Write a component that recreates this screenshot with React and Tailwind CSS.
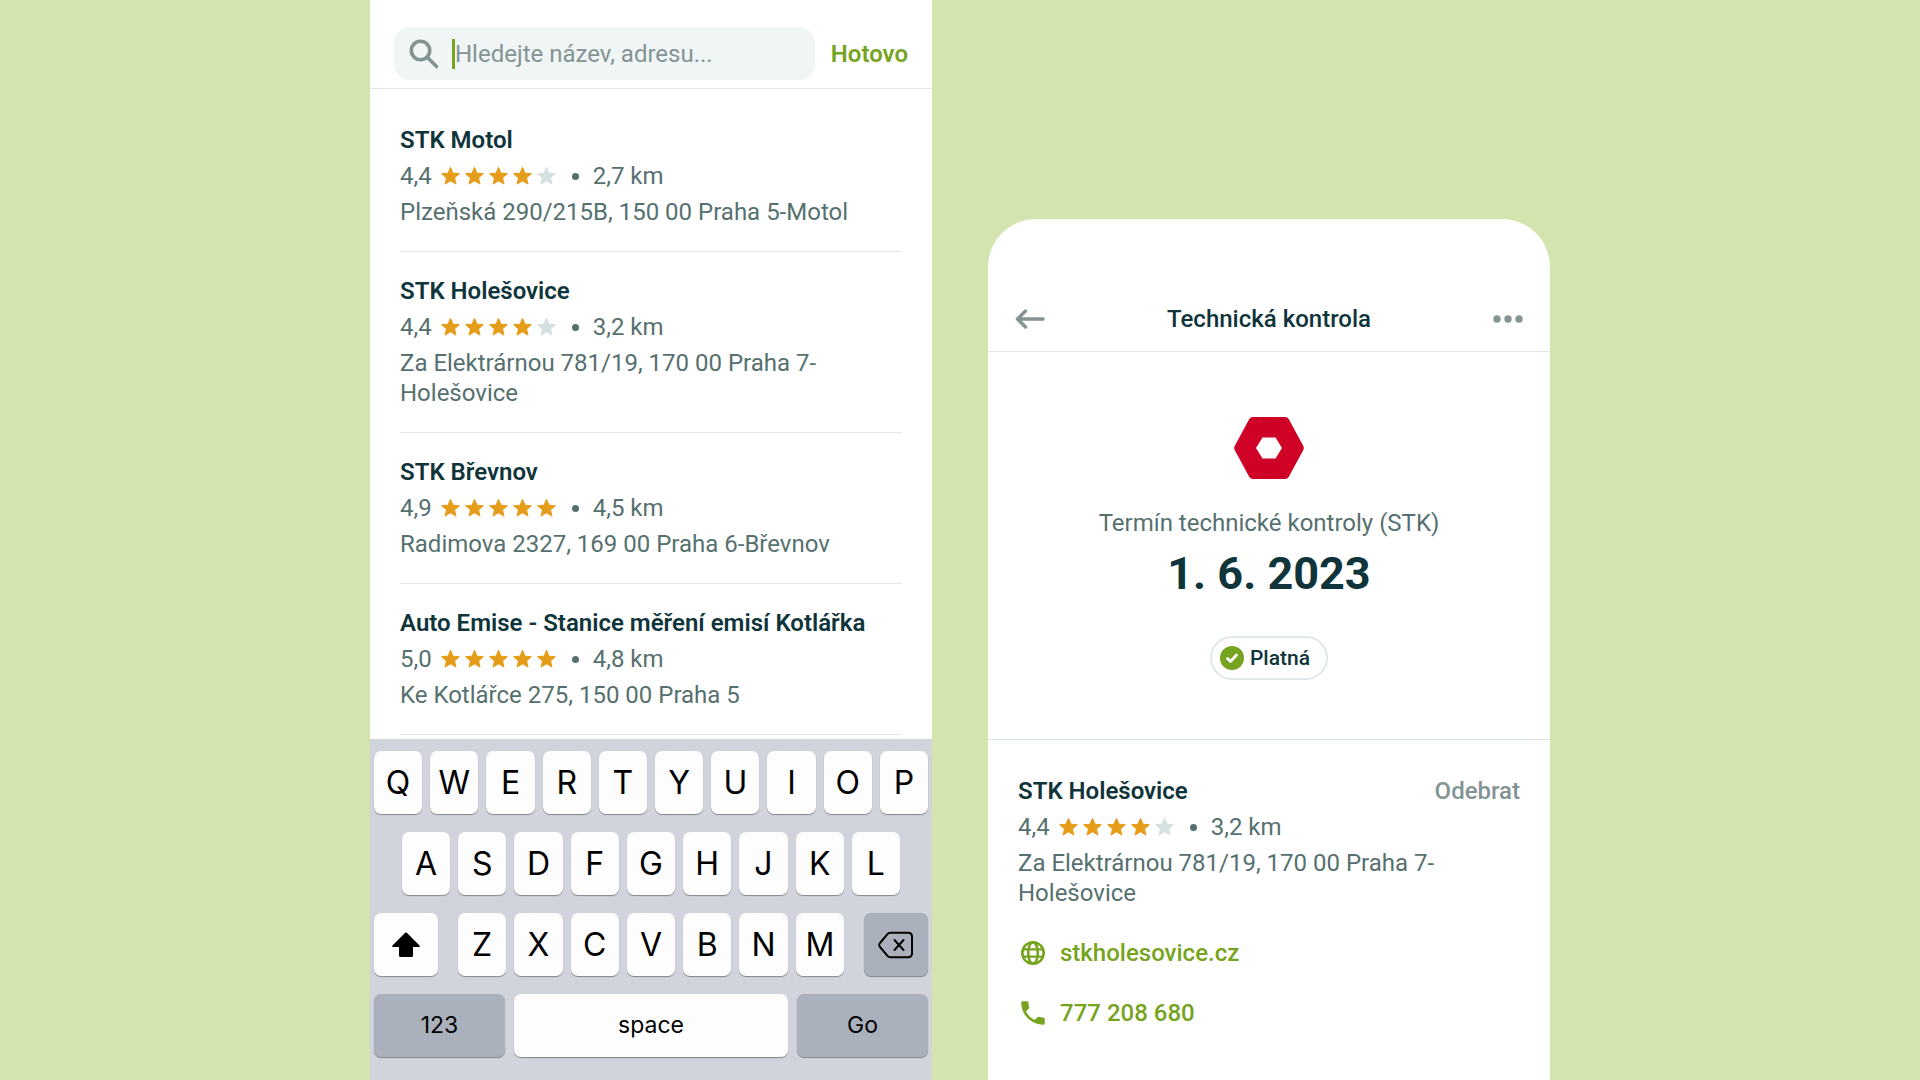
import React, { useState } from "react";

const STATIONS = [
  { name: "STK Motol", rating: "4,4", stars: 4, distance: "2,7 km", address: "Plzeňská 290/215B, 150 00 Praha 5-Motol" },
  { name: "STK Holešovice", rating: "4,4", stars: 4, distance: "3,2 km", address: "Za Elektrárnou 781/19, 170 00 Praha 7-Holešovice" },
  { name: "STK Břevnov", rating: "4,9", stars: 5, distance: "4,5 km", address: "Radimova 2327, 169 00 Praha 6-Břevnov" },
  { name: "Auto Emise - Stanice měření emisí Kotlářka", rating: "5,0", stars: 5, distance: "4,8 km", address: "Ke Kotlářce 275, 150 00 Praha 5" },
];

const Star = ({ filled }) => (
  <svg viewBox="0 0 20 20" className={`w-5 h-5 ${filled ? "text-[#e59c18]" : "text-[#d5e0e0]"}`} fill="currentColor" stroke="currentColor" strokeWidth="1" strokeLinejoin="round" aria-hidden="true">
    <path d="M10.500 1.300L13 7.200l6.300.5-4.800 4.200 1.500 6.200-5.500-3.300L5 18.100l1.500-6.200-4.800-4.200L8 7.200z" />
  </svg>
);

const Station = ({ station }) => (
  <div className="flex flex-col gap-1.5">
    <h2 className="font-semibold text-[#0f353b]">{station.name}</h2>
    <div className="flex items-center">
      <span>{station.rating}</span>
      <span className="flex gap-1 ml-2" role="img" aria-label={`${station.stars} / 5`}>
        {[1, 2, 3, 4, 5].map((n) => (
          <Star key={n} filled={n <= station.stars} />
        ))}
      </span>
      <span className="w-[7px] h-[7px] rounded-full bg-[#56706f] ml-4 mr-3.5" />
      <span>{station.distance}</span>
    </div>
    <p className="max-w-[460px]">{station.address}</p>
  </div>
);

const Key = ({ children, dark, className = "flex-1", ...rest }) => (
  <button
    type="button"
    className={`h-[63px] min-w-0 rounded-[7px] flex items-center justify-center shadow-[0_1px_1px_#85878c] text-black ${dark ? "bg-[#abb1bc]" : "bg-[#fdfdfe]"} ${className}`}
    {...rest}
  >
    {children}
  </button>
);

const Letters = ({ row }) => row.split("").map((letter) => <Key key={letter}>{letter}</Key>);

const Keyboard = () => (
  <div className="bg-[#d2d4dd] px-1 pt-3 pb-[23px] flex flex-col gap-[18px] font-['Inter',sans-serif] text-[32px] leading-none">
    <div className="flex gap-2">
      <Letters row="QWERTYUIOP" />
    </div>
    <div className="flex gap-2 px-7">
      <Letters row="ASDFGHJKL" />
    </div>
    <div className="flex gap-5">
      <Key className="w-16" aria-label="Shift">
        <svg viewBox="0 0 30 26" className="w-[30px] h-[26px]" fill="currentColor" aria-hidden="true">
          <path d="M14.200 .8q.8-.8 1.600 0L28.500 13.400q1.200 1.500-.6 1.600H22v8.500q0 1.500-1.500 1.500h-11Q8 25 8 23.500V15H2.100q-1.800-.1-.6-1.600z" />
        </svg>
      </Key>
      <div className="flex flex-1 gap-2">
        <Letters row="ZXCVBNM" />
      </div>
      <Key className="w-16" dark aria-label="Delete">
        <svg viewBox="0 0 36 28" className="w-9 h-7" fill="none" stroke="currentColor" strokeWidth="2" strokeLinecap="round" strokeLinejoin="round" aria-hidden="true">
          <path d="M12.500 1.800H30q4 0 4 4v16.400q0 4-4 4H12.500q-1.800 0-3.200-1.500L2 16q-1.600-2 0-4L9.300 3.300q1.400-1.500 3.200-1.500z" />
          <path d="M16.500 9l9 10M25.500 9l-9 10" />
        </svg>
      </Key>
    </div>
    <div className="flex gap-[9px] text-[23px]">
      <Key className="w-[131px]" dark>123</Key>
      <Key>space</Key>
      <Key className="w-[131px]" dark>Go</Key>
    </div>
  </div>
);

const SearchScreen = () => {
  const [query, setQuery] = useState("");

  return (
    <section className="flex-1 max-w-[562px] h-screen bg-white flex flex-col">
      <div className="pt-[27px] pb-2 px-6 flex items-center gap-4 border-b border-[#e2e8e8]">
        <label className="flex-1 min-w-0 h-[53px] rounded-2xl bg-[#f0f5f5] flex items-center px-[15px]">
          <svg viewBox="0 0 30 30" className="w-[30px] h-[30px] shrink-0 text-[#839493]" fill="none" stroke="currentColor" strokeWidth="3.600" strokeLinecap="round" aria-label="Hledat">
            <circle cx="11.500" cy="11.500" r="9.200" />
            <path d="M18.500 18.500L27.500 27.500" />
          </svg>
          {!query && <span className="w-[3px] h-[30px] bg-[#76a420] ml-[13px] shrink-0" />}
          <input
            type="text"
            value={query}
            onChange={(e) => setQuery(e.target.value)}
            placeholder="Hledejte název, adresu..."
            className="flex-1 min-w-0 bg-transparent outline-none caret-[#76a420] placeholder:text-[#839493]"
          />
        </label>
        <button type="button" className="font-semibold text-[#76a420]">Hotovo</button>
      </div>

      <ul className="flex-1 min-h-0 overflow-hidden pt-3 px-[30px]">
        {STATIONS.map((station) => (
          <li key={station.name} className="py-6 border-b border-[#e2e8e8]">
            <Station station={station} />
          </li>
        ))}
      </ul>

      <Keyboard />
    </section>
  );
};

const DetailScreen = () => (
  <section className="flex-1 max-w-[562px] mt-[219px] bg-white rounded-t-[48px] flex flex-col">
    <header className="pt-[68px] px-[27px] border-b border-[#e2e8e8]">
      <div className="h-16 flex items-center justify-between">
        <button type="button" aria-label="Zpět" className="text-[#839493]">
          <svg viewBox="0 0 30 20" className="w-[30px] h-5" fill="none" stroke="currentColor" strokeWidth="3.500" strokeLinecap="round" strokeLinejoin="round" aria-hidden="true">
            <path d="M28 10H3M10.500 2L2.500 10l8 8" />
          </svg>
        </button>
        <h1 className="font-medium text-[#0f353b]">Technická kontrola</h1>
        <button type="button" aria-label="Další" className="text-[#839493]">
          <svg viewBox="0 0 30 8" className="w-[30px] h-2" fill="currentColor" aria-hidden="true">
            <circle cx="4" cy="4" r="3.700" />
            <circle cx="15" cy="4" r="3.700" />
            <circle cx="26" cy="4" r="3.700" />
          </svg>
        </button>
      </div>
    </header>

    <div className="pt-[65px] pb-[59px] flex flex-col items-center border-b border-[#d8e2e2]">
      <svg viewBox="0 0 70 62" className="w-[70px] h-[62px]" aria-hidden="true">
        <path fill="#d00127" fillRule="evenodd" d="M19 0h32q2.500 0 3.700 2L69.300 29q1 2 0 4L54.700 60q-1.200 2-3.700 2H19q-2.500 0-3.700-2L.7 33q-1-2 0-4L15.300 2Q16.500 0 19 0zM28.500 20.500L22 31l6.500 10.500h13L48 31l-6.500-10.500z" />
      </svg>
      <p className="mt-[29px]">Termín technické kontroly (STK)</p>
      <p className="mt-2 text-[45px] leading-[56px] font-bold text-[#0f353b]">1. 6. 2023</p>
      <div className="mt-[34px] h-11 pl-2 pr-4 rounded-full border-2 border-[#dfe8e8] flex items-center gap-1.5 text-[21px] font-medium text-[#0f353b]">
        <svg viewBox="0 0 24 24" className="w-6 h-6" aria-hidden="true">
          <circle cx="12" cy="12" r="12" fill="#76a420" />
          <path d="M7.500 12.500l3 3 6-6.500" fill="none" stroke="#fff" strokeWidth="2.800" strokeLinecap="round" strokeLinejoin="round" />
        </svg>
        Platná
      </div>
    </div>

    <div className="pt-9 px-[30px]">
      <div className="flex items-start justify-between">
        <Station station={STATIONS[1]} />
        <button type="button" className="font-medium text-[#839493]">Odebrat</button>
      </div>
      <div className="mt-[30px] flex flex-col items-start gap-[30px] font-medium text-[#76a420]">
        <a href="#web" className="flex items-center gap-3">
          <svg viewBox="0 0 30 30" className="w-[30px] h-[30px]" fill="none" stroke="currentColor" strokeWidth="2.600" aria-hidden="true">
            <circle cx="15" cy="15" r="10.700" />
            <ellipse cx="15" cy="15" rx="4.800" ry="10.700" />
            <path d="M5 11.400h20M5 18.600h20" strokeWidth="2.200" />
          </svg>
          stkholesovice.cz
        </a>
        <a href="tel:777208680" className="flex items-center gap-3">
          <svg viewBox="0.500 0.500 23 23" className="w-[30px] h-[30px]" fill="currentColor" aria-hidden="true">
            <path d="M6.620 10.790c1.440 2.830 3.760 5.140 6.590 6.590l2.200-2.200c.27-.27.67-.36 1.020-.24 1.120.37 2.330.57 3.570.57.55 0 1 .45 1 1V20c0 .55-.45 1-1 1-9.390 0-17-7.610-17-17 0-.55.45-1 1-1h3.500c.55 0 1 .45 1 1 0 1.250.2 2.450.57 3.570.11.35.03.74-.25 1.020l-2.200 2.200z" />
          </svg>
          777 208 680
        </a>
      </div>
    </div>
  </section>
);

const App = () => (
  <main className="min-h-screen h-screen overflow-hidden bg-[#d3e4af] flex justify-center gap-14 font-['Roboto',sans-serif] text-2xl leading-[30px] text-[#56706f]">
    <SearchScreen />
    <DetailScreen />
  </main>
);

export default App;
